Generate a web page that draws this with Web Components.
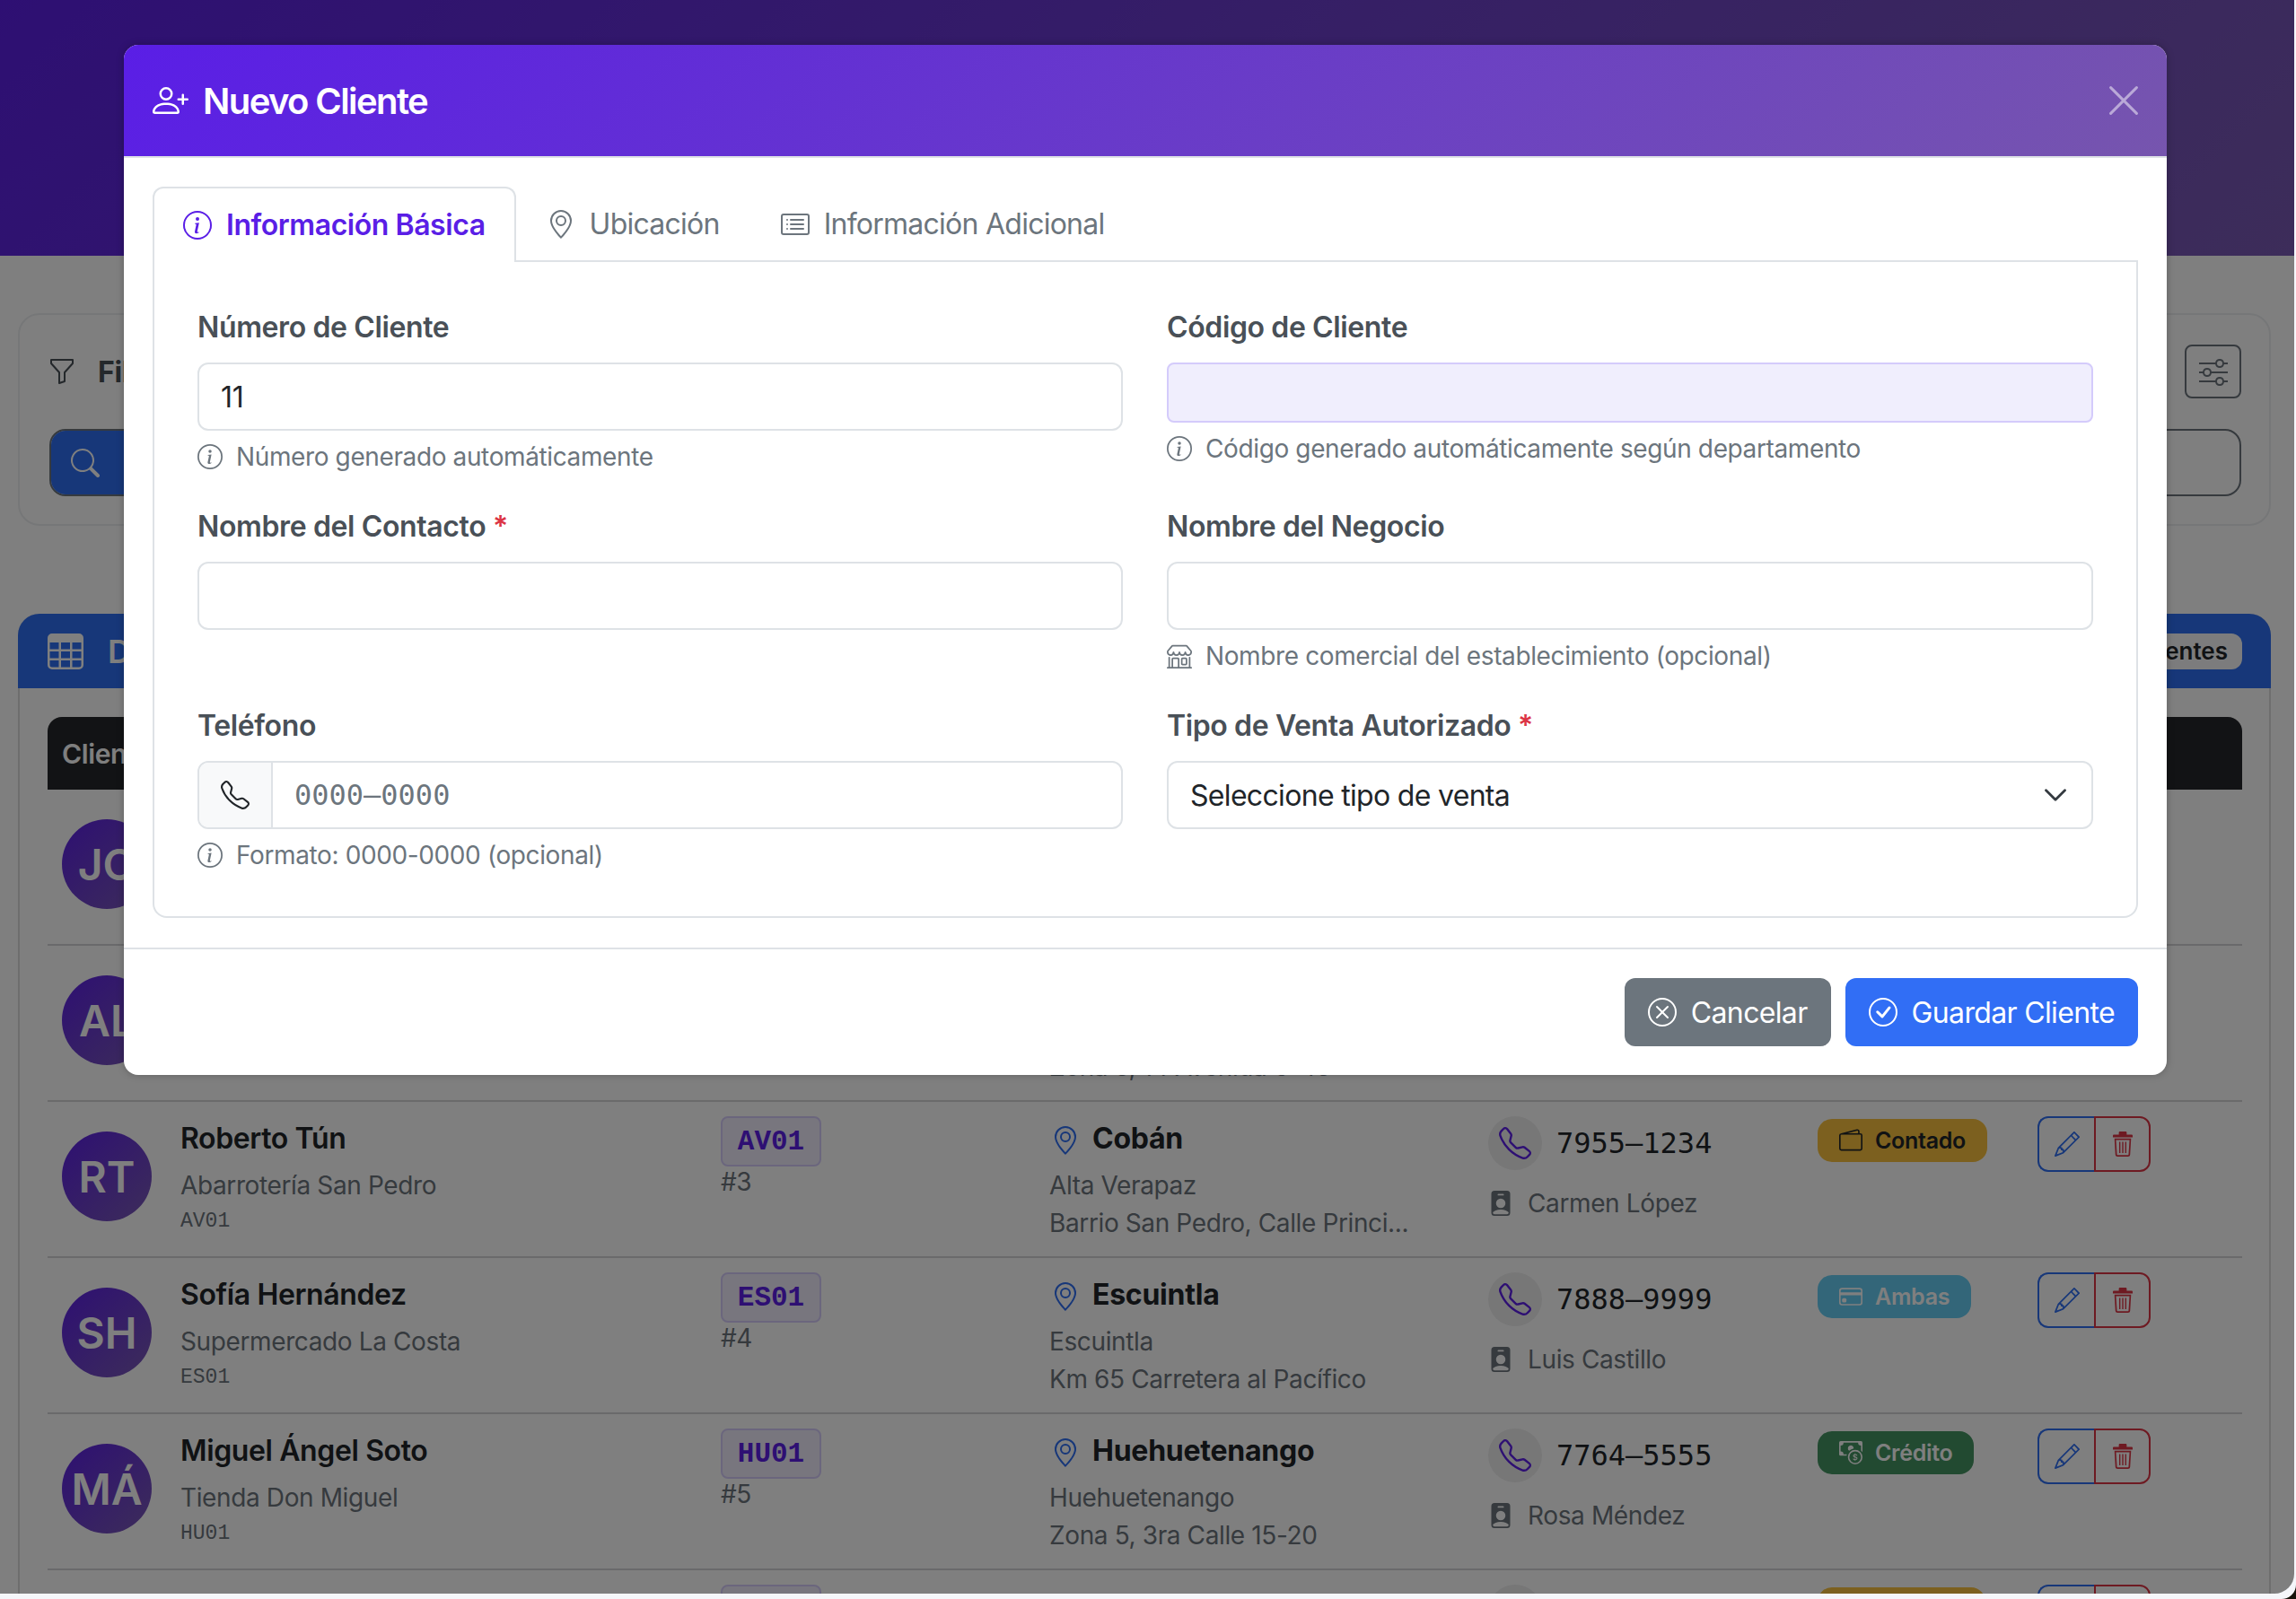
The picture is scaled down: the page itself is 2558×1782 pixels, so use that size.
<!DOCTYPE html>
<html lang="es">
<head>
<meta charset="utf-8">
<title>Nuevo Cliente</title>
<style>
  html {
    background: #17130a;
    font-family: Inter, "Liberation Sans", sans-serif;
    color: #212529;
    letter-spacing: -0.38px;
    overflow: hidden;
  }
  body {
    position: relative;
    width: 2558px;
    height: 1782px;
    margin: 0;
    overflow: hidden;
    background: #f5f6fa;
    border-bottom-right-radius: 16px;
  }
</style>
</head>
<body>
  <clients-page>
    <filter-panel></filter-panel>
    <clients-card></clients-card>
  </clients-page>

  <client-modal>
    <modal-tabs></modal-tabs>
    <client-form>
      <form-field label="Número de Cliente" hint="Número generado automáticamente">
        <text-box value="11"></text-box>
      </form-field>
      <form-field label="Código de Cliente" hint="Código generado automáticamente según departamento">
        <text-box variant="generated"></text-box>
      </form-field>
      <form-field label="Nombre del Contacto" required>
        <text-box></text-box>
      </form-field>
      <form-field label="Nombre del Negocio" hint="Nombre comercial del establecimiento (opcional)" hint-icon="shop">
        <text-box></text-box>
      </form-field>
      <form-field label="Teléfono" hint="Formato: 0000-0000 (opcional)">
        <phone-box placeholder="0000–0000"></phone-box>
      </form-field>
      <form-field label="Tipo de Venta Autorizado" required>
        <select-box value="Seleccione tipo de venta"></select-box>
      </form-field>
    </client-form>
  </client-modal>

<script>
/**
 * Paths of the icons used on the page, all on a 16 x 16 grid.
 */
const ICONS = {
  personPlus: '<path d="M6 8a3 3 0 1 0 0-6 3 3 0 0 0 0 6m2-3a2 2 0 1 1-4 0 2 2 0 0 1 4 0m4 8c0 1-1 1-1 1H1s-1 0-1-1 1-4 6-4 6 3 6 4m-1-.004c-.001-.246-.154-.986-.832-1.664C9.516 10.68 8.289 10 6 10s-3.516.68-4.168 1.332c-.678.678-.83 1.418-.832 1.664z"/><path fill-rule="evenodd" d="M13.5 5a.5.5 0 0 1 .5.5V7h1.5a.5.5 0 0 1 0 1H14v1.5a.5.5 0 0 1-1 0V8h-1.5a.5.5 0 0 1 0-1H13V5.5a.5.5 0 0 1 .5-.5"/>',
  info: '<path d="M8 15A7 7 0 1 1 8 1a7 7 0 0 1 0 14m0 1A8 8 0 1 0 8 0a8 8 0 0 0 0 16"/><path d="m8.93 6.588-2.29.287-.082.38.45.083c.294.07.352.176.288.469l-.738 3.468c-.194.897.105 1.319.808 1.319.545 0 1.178-.252 1.465-.598l.088-.416c-.2.176-.492.246-.686.246-.275 0-.375-.193-.304-.533zM9 4.5a1 1 0 1 1-2 0 1 1 0 0 1 2 0"/>',
  pin: '<path d="M12.166 8.94c-.524 1.062-1.234 2.12-1.96 3.07A32 32 0 0 1 8 14.58a32 32 0 0 1-2.206-2.57c-.726-.95-1.436-2.008-1.96-3.07C3.304 7.867 3 6.862 3 6a5 5 0 0 1 10 0c0 .862-.305 1.867-.834 2.94M8 16s6-5.686 6-10A6 6 0 0 0 2 6c0 4.314 6 10 6 10"/><path d="M8 8a2 2 0 1 1 0-4 2 2 0 0 1 0 4m0 1a3 3 0 1 0 0-6 3 3 0 0 0 0 6"/>',
  cardList: '<path d="M14.5 3a.5.5 0 0 1 .5.5v9a.5.5 0 0 1-.5.5h-13a.5.5 0 0 1-.5-.5v-9a.5.5 0 0 1 .5-.5zm-13-1A1.5 1.5 0 0 0 0 3.5v9A1.5 1.5 0 0 0 1.5 14h13a1.5 1.5 0 0 0 1.5-1.5v-9A1.5 1.5 0 0 0 14.5 2z"/><path d="M5 8a.5.5 0 0 1 .5-.5h7a.5.5 0 0 1 0 1h-7A.5.5 0 0 1 5 8m0-2.5a.5.5 0 0 1 .5-.5h7a.5.5 0 0 1 0 1h-7a.5.5 0 0 1-.5-.5m0 5a.5.5 0 0 1 .5-.5h7a.5.5 0 0 1 0 1h-7a.5.5 0 0 1-.5-.5m-1-5a.5.5 0 1 1-1 0 .5.5 0 0 1 1 0M4 8a.5.5 0 1 1-1 0 .5.5 0 0 1 1 0m0 2.5a.5.5 0 1 1-1 0 .5.5 0 0 1 1 0"/>',
  phone: '<path d="M3.654 1.328a.678.678 0 0 0-1.015-.063L1.605 2.3c-.483.484-.661 1.169-.45 1.77a17.6 17.6 0 0 0 4.168 6.608 17.6 17.6 0 0 0 6.608 4.168c.601.211 1.286.033 1.77-.45l1.034-1.034a.678.678 0 0 0-.063-1.015l-2.307-1.794a.68.68 0 0 0-.58-.122l-2.19.547a1.75 1.75 0 0 1-1.657-.459L5.482 8.062a1.75 1.75 0 0 1-.46-1.657l.548-2.19a.68.68 0 0 0-.122-.58zM1.884.511a1.745 1.745 0 0 1 2.612.163L6.29 2.98c.329.423.445.974.315 1.494l-.547 2.19a.68.68 0 0 0 .178.643l2.457 2.457a.68.68 0 0 0 .644.178l2.189-.547a1.75 1.75 0 0 1 1.494.315l2.306 1.794c.829.645.905 1.87.163 2.611l-1.034 1.034c-.74.74-1.846 1.065-2.877.702a18.6 18.6 0 0 1-7.01-4.42 18.6 18.6 0 0 1-4.42-7.009c-.362-1.03-.037-2.137.703-2.877z"/>',
  xCircle: '<path d="M8 15A7 7 0 1 1 8 1a7 7 0 0 1 0 14m0 1A8 8 0 1 0 8 0a8 8 0 0 0 0 16"/><path d="M4.646 4.646a.5.5 0 0 1 .708 0L8 7.293l2.646-2.647a.5.5 0 0 1 .708.708L8.707 8l2.647 2.646a.5.5 0 0 1-.708.708L8 8.707l-2.646 2.647a.5.5 0 0 1-.708-.708L7.293 8 4.646 5.354a.5.5 0 0 1 0-.708"/>',
  checkCircle: '<path d="M8 15A7 7 0 1 1 8 1a7 7 0 0 1 0 14m0 1A8 8 0 1 0 8 0a8 8 0 0 0 0 16"/><path d="m10.97 4.97-.02.022-3.473 4.425-2.093-2.094a.75.75 0 0 0-1.06 1.06L6.97 11.03a.75.75 0 0 0 1.079-.02l3.992-4.99a.75.75 0 0 0-1.071-1.05"/>',
  shop: '<path d="M2.97 1.35A1 1 0 0 1 3.73 1h8.54a1 1 0 0 1 .76.35l2.609 3.044A1.5 1.5 0 0 1 16 5.37v.255a2.375 2.375 0 0 1-4.25 1.458A2.37 2.37 0 0 1 9.875 8 2.37 2.37 0 0 1 8 7.083 2.37 2.37 0 0 1 6.125 8a2.37 2.37 0 0 1-1.875-.917A2.375 2.375 0 0 1 0 5.625V5.37a1.5 1.5 0 0 1 .361-.976zm1.78 4.275a1.375 1.375 0 0 0 2.75 0 .5.5 0 0 1 1 0 1.375 1.375 0 0 0 2.75 0 .5.5 0 0 1 1 0 1.375 1.375 0 1 0 2.75 0V5.37a.5.5 0 0 0-.12-.325L12.27 2H3.73L1.12 5.045A.5.5 0 0 0 1 5.37v.255a1.375 1.375 0 0 0 2.75 0 .5.5 0 0 1 1 0M1.5 8.5A.5.5 0 0 1 2 9v6h1v-5a1 1 0 0 1 1-1h3a1 1 0 0 1 1 1v5h6V9a.5.5 0 0 1 1 0v6h.5a.5.5 0 0 1 0 1H.5a.5.5 0 0 1 0-1H1V9a.5.5 0 0 1 .5-.5M4 15h3v-5H4zm5-5a1 1 0 0 1 1-1h2a1 1 0 0 1 1 1v3a1 1 0 0 1-1 1h-2a1 1 0 0 1-1-1zm3 0h-2v3h2z"/>',
  funnel: '<path d="M1.5 1.5A.5.5 0 0 1 2 1h12a.5.5 0 0 1 .5.5v2a.5.5 0 0 1-.128.334L10 8.692V13.5a.5.5 0 0 1-.342.474l-3 1A.5.5 0 0 1 6 14.5V8.692L1.628 3.834A.5.5 0 0 1 1.5 3.5zm1 .5v1.308l4.372 4.858A.5.5 0 0 1 7 8.5v5.306l2-.666V8.5a.5.5 0 0 1 .128-.334L13.5 3.308V2z"/>',
  search: '<path d="M11.742 10.344a6.5 6.5 0 1 0-1.397 1.398h-.001q.044.06.098.115l3.85 3.85a1 1 0 0 0 1.415-1.414l-3.85-3.85a1 1 0 0 0-.115-.1zM12 6.5a5.5 5.5 0 1 1-11 0 5.5 5.5 0 0 1 11 0"/>',
  sliders: '<path fill-rule="evenodd" d="M11.5 2a1.5 1.5 0 1 0 0 3 1.5 1.5 0 0 0 0-3M9.05 3a2.5 2.5 0 0 1 4.9 0H16v1h-2.05a2.5 2.5 0 0 1-4.9 0H0V3zM4.5 7a1.5 1.5 0 1 0 0 3 1.5 1.5 0 0 0 0-3M2.05 8a2.5 2.5 0 0 1 4.9 0H16v1H6.95a2.5 2.5 0 0 1-4.9 0H0V8zm9.45 4a1.5 1.5 0 1 0 0 3 1.5 1.5 0 0 0 0-3m-2.45 1a2.5 2.5 0 0 1 4.9 0H16v1h-2.05a2.5 2.5 0 0 1-4.9 0H0v-1z"/>',
  table: '<path d="M0 2a2 2 0 0 1 2-2h12a2 2 0 0 1 2 2v12a2 2 0 0 1-2 2H2a2 2 0 0 1-2-2zm15 2h-4v3h4zm0 4h-4v3h4zm0 4h-4v3h3a1 1 0 0 0 1-1zm-5 3v-3H6v3zm-5 0v-3H1v2a1 1 0 0 0 1 1zm-4-4h4V8H1zm0-4h4V4H1zm5-3v3h4V4zm4 4H6v3h4z"/>',
  pencil: '<path d="M12.146.146a.5.5 0 0 1 .708 0l3 3a.5.5 0 0 1 0 .708l-10 10a.5.5 0 0 1-.168.11l-5 2a.5.5 0 0 1-.65-.65l2-5a.5.5 0 0 1 .11-.168zM11.207 2.5 13.5 4.793 14.793 3.5 12.5 1.207zm1.586 3L10.5 3.207 4 9.707V10h.5a.5.5 0 0 1 .5.5v.5h.5a.5.5 0 0 1 .5.5v.5h.293zm-9.761 5.175-.106.106-1.528 3.821 3.821-1.528.106-.106A.5.5 0 0 1 5 12.5V12h-.5a.5.5 0 0 1-.5-.5V11h-.5a.5.5 0 0 1-.468-.325"/>',
  trash: '<path d="M6.2 0h3.6c.4 0 .7.3.7.7V2h3c.5 0 .8.3.8.8v.9H1.7v-.9c0-.5.3-.8.8-.8h3V.7c0-.4.3-.7.7-.7z"/><path fill-rule="evenodd" d="M2.7 4.4h10.6l-.6 10.3c-.1.8-.6 1.3-1.4 1.3H4.7c-.8 0-1.3-.5-1.4-1.3zm1 1 .6 9.2c0 .3.2.4.4.4h6.6c.2 0 .4-.1.4-.4l.6-9.2z"/><path d="M5.7 6.5h.8v7.2h-.8zm1.9 0h.8v7.2h-.8zm1.9 0h.8v7.2h-.8z"/>',
  wallet: '<path d="M12.136.326A1.5 1.5 0 0 1 14 1.78V3h.5A1.5 1.5 0 0 1 16 4.5v9a1.5 1.5 0 0 1-1.5 1.5h-13A1.5 1.5 0 0 1 0 13.5v-9a1.5 1.5 0 0 1 1.432-1.499zM5.562 3H13V1.78a.5.5 0 0 0-.621-.484zM1.5 4a.5.5 0 0 0-.5.5v9a.5.5 0 0 0 .5.5h13a.5.5 0 0 0 .5-.5v-9a.5.5 0 0 0-.5-.5z"/>',
  creditCard: '<path d="M0 4a2 2 0 0 1 2-2h12a2 2 0 0 1 2 2v8a2 2 0 0 1-2 2H2a2 2 0 0 1-2-2zm2-1a1 1 0 0 0-1 1v1h14V4a1 1 0 0 0-1-1zm13 4H1v5a1 1 0 0 0 1 1h12a1 1 0 0 0 1-1z"/><path d="M2 10a1 1 0 0 1 1-1h1a1 1 0 0 1 1 1v1a1 1 0 0 1-1 1H3a1 1 0 0 1-1-1z"/>',
  cashCoin: '<path fill-rule="evenodd" d="M11 15a4 4 0 1 0 0-8 4 4 0 0 0 0 8m5-4a5 5 0 1 1-10 0 5 5 0 0 1 10 0"/><path d="M9.438 11.944c.047.596.518 1.06 1.363 1.116v.44h.375v-.443c.875-.061 1.386-.529 1.386-1.207 0-.618-.39-.936-1.09-1.1l-.296-.07v-1.2c.376.043.614.248.671.532h.658c-.047-.575-.54-1.024-1.329-1.073V8.5h-.375v.45c-.747.073-1.255.522-1.255 1.158 0 .562.378.92 1.007 1.066l.248.061v1.272c-.384-.058-.639-.27-.696-.563h-.668zm1.36-1.354c-.369-.085-.569-.26-.569-.522 0-.294.216-.514.572-.578v1.1zm.432.746c.449.104.655.272.655.569 0 .339-.257.571-.709.614v-1.195z"/><path d="M1 0a1 1 0 0 0-1 1v8a1 1 0 0 0 1 1h4.083q.088-.517.258-1H3a2 2 0 0 0-2-2V3a2 2 0 0 0 2-2h10a2 2 0 0 0 2 2v3.528c.38.34.717.728 1 1.154V1a1 1 0 0 0-1-1z"/><path d="M9.998 5.083 10 5a2 2 0 1 0-3.132 1.65 6 6 0 0 1 3.13-1.567"/>',
  personBadge: '<path d="M2 2a2 2 0 0 1 2-2h8a2 2 0 0 1 2 2v12a2 2 0 0 1-2 2H4a2 2 0 0 1-2-2zm4.5 0a.5.5 0 0 0 0 1h3a.5.5 0 0 0 0-1zM8 11a3 3 0 1 0 0-6 3 3 0 0 0 0 6m5 2.755C12.146 12.825 10.623 12 8 12s-4.146.826-5 1.755V14a1 1 0 0 0 1 1h8a1 1 0 0 0 1-1z"/>',
  chevron: '<path fill="none" stroke="currentColor" stroke-linecap="round" stroke-linejoin="round" stroke-width="1.6" d="m2 5 6 6 6-6"/>',
  close: '<path fill="none" stroke="currentColor" stroke-linecap="round" stroke-width="1.5" d="M.8.8l14.4 14.4M15.2.8.8 15.2"/>'
}

/**
 * The rows of the clients table. The first two lie behind the dialog,
 * the last one is cut by the bottom of the window.
 */
const CLIENTS = [
  { initials: 'JO' },
  { initials: 'AL', address: 'Zona 5, 14 Avenida 6-45' },
  { initials: 'RT', name: 'Roberto Tún', shop: 'Abarrotería San Pedro', code: 'AV01', num: '#3', city: 'Cobán', dept: 'Alta Verapaz', address: 'Barrio San Pedro, Calle Princi...', phone: '7955–1234', contact: 'Carmen López', sale: 'contado' },
  { initials: 'SH', name: 'Sofía Hernández', shop: 'Supermercado La Costa', code: 'ES01', num: '#4', city: 'Escuintla', dept: 'Escuintla', address: 'Km 65 Carretera al Pacífico', phone: '7888–9999', contact: 'Luis Castillo', sale: 'ambas' },
  { initials: 'MÁ', name: 'Miguel Ángel Soto', shop: 'Tienda Don Miguel', code: 'HU01', num: '#5', city: 'Huehuetenango', dept: 'Huehuetenango', address: 'Zona 5, 3ra Calle 15-20', phone: '7764–5555', contact: 'Rosa Méndez', sale: 'credito' },
  { initials: '', sale: 'vacia' }
]

/**
 * The look of each kind of sale badge.
 */
const SALES = {
  contado: { label: 'Contado', icon: 'wallet', bg: '#f8c13f', fg: '#212529' },
  ambas: { label: 'Ambas', icon: 'creditCard', bg: '#66cdf2', fg: '#fff' },
  credito: { label: 'Crédito', icon: 'cashCoin', bg: '#459562', fg: '#fff' },
  vacia: { label: '', icon: 'wallet', bg: '#f8c13f', fg: '#212529', width: '187px' }
}

/**
 * An inline icon, taken from the ICONS table.
 */
customElements.define('app-icon',
  class extends HTMLElement {
    constructor () {
      super()
      this.attachShadow({ mode: 'open' })
    }

    connectedCallback () {
      const size = this.getAttribute('size') || 32
      this.shadowRoot.innerHTML = `
        <style>
          :host { display: inline-flex; flex: none; }
          svg { display: block; width: ${size}px; height: ${size}px; fill: currentColor; }
        </style>
        <svg viewBox="0 0 16 16">${ICONS[this.getAttribute('name')]}</svg>
      `
    }
  })

/**
 * The page behind the dialog: coloured band on top, then the content,
 * and the dark layer that the open dialog puts over all of it.
 */
const pageTemplate = document.createElement('template')
pageTemplate.innerHTML = `
  <style>
    :host {
      display: block;
      width: 2556px;
      height: 1776px;
      overflow: hidden;
      background: #fff;
      border-bottom-right-radius: 22px;
      position: relative;
    }
    .hero {
      height: 285px;
      background: linear-gradient(135deg, #5c1fe6, #7a5ab4);
    }
    main {
      display: flex;
      flex-direction: column;
      gap: 98px;
      width: 2510px;
      margin: 64px 0 0 20px;
    }
    .layer {
      position: absolute;
      inset: 0;
      background: rgba(0, 0, 0, 0.5);
    }
  </style>
  <div class="hero"></div>
  <main><slot></slot></main>
  <div class="layer"></div>
`
customElements.define('clients-page',
  class extends HTMLElement {
    constructor () {
      super()
      this.attachShadow({ mode: 'open' })
        .appendChild(pageTemplate.content.cloneNode(true))
    }
  })

/**
 * The filter card, mostly covered by the dialog.
 */
const filterTemplate = document.createElement('template')
filterTemplate.innerHTML = `
  <style>
    :host {
      display: block;
      height: 237px;
      box-sizing: border-box;
      padding: 33px 31px 34px 33px;
      border: 2px solid #eceef0;
      border-radius: 24px;
    }
    .top { display: flex; align-items: center; justify-content: space-between; height: 60px; }
    .title { display: flex; align-items: center; gap: 24px; margin-left: -2px; font-size: 32px; font-weight: 700; color: #495057; }
    .tune {
      display: flex;
      align-items: center;
      justify-content: center;
      width: 63px;
      height: 60px;
      box-sizing: border-box;
      border: 2px solid #6c757d;
      border-radius: 8px;
      color: #6c757d;
    }
    .search {
      display: flex;
      height: 75px;
      margin-top: 34px;
      box-sizing: border-box;
      border: 2px solid #6c757d;
      border-radius: 18px;
      overflow: hidden;
    }
    .go {
      display: flex;
      align-items: center;
      justify-content: center;
      width: 81px;
      box-sizing: border-box;
      padding-right: 6px;
      background: #2e6ef2;
      color: #fff;
    }
  </style>
  <div class="top">
    <div class="title"><app-icon name="funnel" size="32"></app-icon><span>Filtros</span></div>
    <div class="tune"><app-icon name="sliders" size="32"></app-icon></div>
  </div>
  <div class="search"><div class="go"><app-icon name="search" size="32"></app-icon></div></div>
`
customElements.define('filter-panel',
  class extends HTMLElement {
    constructor () {
      super()
      this.attachShadow({ mode: 'open' })
        .appendChild(filterTemplate.content.cloneNode(true))
    }
  })

/**
 * The card that holds the clients table.
 */
const cardTemplate = document.createElement('template')
cardTemplate.innerHTML = `
  <style>
    :host {
      display: block;
      border-right: 2px solid #dcdcdc;
      border-left: 2px solid #dcdcdc;
      border-radius: 24px 24px 0 0;
      margin-bottom: -400px;
    }
    header {
      display: flex;
      align-items: center;
      justify-content: space-between;
      height: 83px;
      box-sizing: border-box;
      margin: 0 -2px;
      padding: 0 32px 0 33px;
      background: #2e6ef2;
      border-radius: 24px 24px 0 0;
      color: #fff;
      font-size: 36px;
      font-weight: 600;
    }
    .title { display: flex; align-items: center; gap: 27px; }
    .count {
      display: flex;
      align-items: center;
      height: 40px;
      padding: 0 16px;
      border-radius: 12px;
      background: #f8f9fa;
      color: #212529;
      font-size: 26px;
      font-weight: 600;
      letter-spacing: 0;
    }
    .body { padding: 32px 30px 0 31px; }
    .head {
      height: 81px;
      box-sizing: border-box;
      padding: 0 16px;
      display: flex;
      align-items: center;
      border-radius: 16px 16px 0 0;
      background: #25272b;
      color: #fff;
      font-size: 30px;
      font-weight: 600;
    }
  </style>
  <header>
    <div class="title"><app-icon name="table" size="40"></app-icon><span>Directorio de Clientes</span></div>
    <div class="count">5 clientes</div>
  </header>
  <div class="body">
    <div class="head">Cliente</div>
    <div class="rows"></div>
  </div>
`
customElements.define('clients-card',
  class extends HTMLElement {
    constructor () {
      super()
      this.attachShadow({ mode: 'open' })
        .appendChild(cardTemplate.content.cloneNode(true))

      const rows = this.shadowRoot.querySelector('.rows')
      CLIENTS.forEach(client => {
        const row = document.createElement('client-row')
        row.client = client
        rows.appendChild(row)
      })
    }
  })

/**
 * One client in the table.
 */
customElements.define('client-row',
  class extends HTMLElement {
    constructor () {
      super()
      this.attachShadow({ mode: 'open' })
    }

    connectedCallback () {
      const c = this.client
      const sale = SALES[c.sale]
      this.shadowRoot.innerHTML = `
        <style>
          :host {
            display: grid;
            grid-template-columns: 734px 366px 491px 365px 246px 243px;
            height: 174px;
            box-sizing: border-box;
            border-bottom: 2px solid #d4d5d7;
            font-size: 28px;
            color: #6c757d;
          }
          .cell { box-sizing: border-box; padding: 16px 16px 0; }
          .client { display: flex; gap: 32px; }
          .avatar {
            display: flex;
            align-items: center;
            justify-content: center;
            flex: none;
            width: 100px;
            height: 100px;
            margin-top: 17px;
            border-radius: 50%;
            background: linear-gradient(135deg, #5c1fe6, #7a5ab4);
            color: #fff;
            font-size: 48px;
            font-weight: 600;
            letter-spacing: 0;
          }
          .strong { height: 48px; margin-top: 1px; font-size: 32px; line-height: 48px; font-weight: 600; color: #212529; }
          .line { height: 42px; line-height: 42px; white-space: nowrap; }
          .sub { margin-top: 7px; }
          .mono { margin-top: 4px; font: 23px/30px "Liberation Mono", monospace; letter-spacing: 0; }
          .code {
            width: 112px;
            height: 56px;
            box-sizing: border-box;
            display: flex;
            align-items: center;
            justify-content: center;
            border: 2px solid #d6cdfb;
            border-radius: 8px;
            background: #f0edfd;
            color: #5c1fe6;
            font: 700 31px "Liberation Mono", monospace;
            letter-spacing: 0;
          }
          .num { height: 34px; line-height: 34px; }
          .city { display: flex; gap: 14px; font-weight: 700; letter-spacing: -0.25px; }
          .pin { color: #2e6ef2; padding: 7px 0 0 2px; }
          .call { display: flex; align-items: center; gap: 16px; margin-left: -2px; }
          .round {
            display: flex;
            align-items: center;
            justify-content: center;
            width: 60px;
            height: 60px;
            border-radius: 50%;
            background: #eeeeef;
            color: #5c1fe6;
          }
          .number { font: 32px "DejaVu Sans Mono", monospace; letter-spacing: 0; color: #212529; }
          .contact { display: flex; align-items: center; gap: 16px; margin: 16px 0 0 -2px; }
          .badge {
            display: inline-flex;
            align-items: center;
            gap: 14px;
            height: 48px;
            margin-top: 3px;
            padding: 0 24px;
            box-sizing: border-box;
            width: ${sale && sale.width ? sale.width : 'auto'};
            border-radius: 16px;
            background: ${sale ? sale.bg : 'none'};
            color: ${sale ? sale.fg : 'inherit'};
            font-size: 25px;
            font-weight: 600;
            letter-spacing: -0.3px;
          }
          .actions { display: flex; padding-left: 15px; }
          .act {
            display: flex;
            align-items: center;
            justify-content: center;
            width: 63px;
            height: 62px;
            box-sizing: border-box;
            border: 2px solid;
          }
          .edit { color: #2e6ef2; border-radius: 12px 0 0 12px; border-right: none; }
          .del { color: #dc3545; border-radius: 0 12px 12px 0; }
        </style>
        <div class="cell client">
          <div class="avatar">${c.initials}</div>
          <div>
            <div class="strong">${c.name || ''}</div>
            <div class="line sub">${c.shop || ''}</div>
            <div class="mono">${c.code || ''}</div>
          </div>
        </div>
        <div class="cell">
          <div class="code">${c.code || ''}</div>
          <div class="num">${c.num || ''}</div>
        </div>
        <div class="cell">
          <div class="strong city"><span class="pin"><app-icon name="pin" size="32"></app-icon></span><span>${c.city || ''}</span></div>
          <div class="line sub">${c.dept || ''}</div>
          <div class="line">${c.address || ''}</div>
        </div>
        <div class="cell">
          <div class="call">
            <div class="round"><app-icon name="phone" size="36"></app-icon></div>
            <span class="number">${c.phone || ''}</span>
          </div>
          <div class="line contact">${c.phone ? `<app-icon name="personBadge" size="28"></app-icon><span>${c.contact}</span>` : ''}</div>
        </div>
        <div class="cell">
          ${sale ? `<span class="badge"><app-icon name="${sale.icon}" size="26"></app-icon><span>${sale.label}</span></span>` : ''}
        </div>
        <div class="cell actions">
          <div class="act edit"><app-icon name="pencil" size="28"></app-icon></div>
          <div class="act del"><app-icon name="trash" size="28"></app-icon></div>
        </div>
      `
    }
  })

/**
 * The dialog: header, slot for the tabs and form, footer with the buttons.
 */
const modalTemplate = document.createElement('template')
modalTemplate.innerHTML = `
  <style>
    :host {
      position: absolute;
      left: 138px;
      top: 50px;
      display: block;
      width: 2276px;
      height: 1148px;
      border-radius: 16px;
      background: #fff;
      box-shadow: 0 0 8px rgba(0, 0, 0, 0.25);
      overflow: hidden;
      z-index: 1;
    }
    header {
      display: flex;
      align-items: center;
      justify-content: space-between;
      height: 126px;
      box-sizing: border-box;
      padding: 0 32px 0 32px;
      border-bottom: 2px solid #dee2e6;
      background: linear-gradient(135deg, #5a1ee6, #7655ae);
      background-clip: padding-box;
      color: #fff;
    }
    .title { display: flex; align-items: center; gap: 16px; font-size: 40px; font-weight: 600; letter-spacing: -1.6px; }
    .close { opacity: 0.5; display: flex; }
    .content { padding: 32px 32px 0; height: 880px; box-sizing: border-box; }
    footer {
      display: flex;
      justify-content: flex-end;
      gap: 16px;
      padding: 32px;
      border-top: 2px solid #dee2e6;
    }
    .btn {
      display: flex;
      align-items: center;
      gap: 16px;
      height: 76px;
      box-sizing: border-box;
      padding: 0 26px;
      border-radius: 12px;
      color: #fff;
      font-size: 32px;
      letter-spacing: -0.65px;
    }
    .cancel { background: #6c757d; }
    .save { background: #316ef5; }
  </style>
  <header>
    <div class="title"><app-icon name="personPlus" size="40"></app-icon><span>Nuevo Cliente</span></div>
    <div class="close"><app-icon name="close" size="32"></app-icon></div>
  </header>
  <div class="content"><slot></slot></div>
  <footer>
    <div class="btn cancel"><app-icon name="xCircle" size="32"></app-icon><span>Cancelar</span></div>
    <div class="btn save"><app-icon name="checkCircle" size="32"></app-icon><span>Guardar Cliente</span></div>
  </footer>
`
customElements.define('client-modal',
  class extends HTMLElement {
    constructor () {
      super()
      this.attachShadow({ mode: 'open' })
        .appendChild(modalTemplate.content.cloneNode(true))
    }
  })

/**
 * The row of tabs on top of the form.
 */
const tabsTemplate = document.createElement('template')
tabsTemplate.innerHTML = `
  <style>
    :host { display: flex; font-size: 32px; color: #6c757d; letter-spacing: -0.75px; position: relative; z-index: 1; }
    .tab {
      display: flex;
      align-items: center;
      gap: 16px;
      height: 84px;
      box-sizing: border-box;
      padding: 0 34px;
      line-height: 48px;
    }
    .active {
      padding: 0 32px;
      border: 2px solid #dee2e6;
      border-bottom: none;
      border-radius: 12px 12px 0 0;
      background: #fff;
      color: #5a1ee6;
      font-weight: 600;
      letter-spacing: -0.45px;
    }
  </style>
  <div class="tab active"><app-icon name="info" size="32"></app-icon><span>Información Básica</span></div>
  <div class="tab"><app-icon name="pin" size="32"></app-icon><span>Ubicación</span></div>
  <div class="tab"><app-icon name="cardList" size="32"></app-icon><span>Información Adicional</span></div>
`
customElements.define('modal-tabs',
  class extends HTMLElement {
    constructor () {
      super()
      this.attachShadow({ mode: 'open' })
        .appendChild(tabsTemplate.content.cloneNode(true))
    }
  })

/**
 * The bordered panel with the two columns of fields.
 */
const formTemplate = document.createElement('template')
formTemplate.innerHTML = `
  <style>
    :host {
      display: grid;
      grid-template-columns: 1031px 1032px;
      grid-auto-rows: 190px;
      column-gap: 49px;
      row-gap: 32px;
      height: 733px;
      box-sizing: border-box;
      margin-top: -2px;
      padding: 49px 48px 48px;
      border: 2px solid #dee2e6;
      border-radius: 0 0 16px 16px;
    }
  </style>
  <slot></slot>
`
customElements.define('client-form',
  class extends HTMLElement {
    constructor () {
      super()
      this.attachShadow({ mode: 'open' })
        .appendChild(formTemplate.content.cloneNode(true))
    }
  })

/**
 * A label, the control passed in the slot, and an optional hint.
 */
customElements.define('form-field',
  class extends HTMLElement {
    constructor () {
      super()
      this.attachShadow({ mode: 'open' })
    }

    connectedCallback () {
      const hint = this.getAttribute('hint')
      const mark = this.hasAttribute('required') ? ' <b>*</b>' : ''
      this.shadowRoot.innerHTML = `
        <style>
          :host { display: block; }
          label { display: block; height: 48px; margin-bottom: 15px; font-size: 32px; line-height: 48px; font-weight: 600; color: #495057; }
          b { color: #dc3545; font-weight: 600; }
          .hint { display: flex; align-items: center; gap: 15px; height: 42px; margin-top: 8px; font-size: 28px; color: #6c757d; }
        </style>
        <label>${this.getAttribute('label')}${mark}</label>
        <slot></slot>
        ${hint ? `<div class="hint"><app-icon name="${this.getAttribute('hint-icon') || 'info'}" size="28"></app-icon><span>${hint}</span></div>` : ''}
      `
    }
  })

/**
 * A plain text box. The generated variant is lower and lavender.
 */
customElements.define('text-box',
  class extends HTMLElement {
    constructor () {
      super()
      this.attachShadow({ mode: 'open' })
    }

    connectedCallback () {
      this.shadowRoot.innerHTML = `
        <style>
          :host {
            display: flex;
            align-items: center;
            height: 76px;
            box-sizing: border-box;
            padding: 0 24px;
            border: 2px solid #dee2e6;
            border-radius: 12px;
            font-size: 32px;
            color: #212529;
          }
          :host([variant="generated"]) { height: 67px; border-color: #d4cbfb; background: #f0eefd; border-radius: 8px; }
        </style>
        <span>${this.getAttribute('value') || ''}</span>
      `
    }
  })

/**
 * The phone box with its icon on the left.
 */
customElements.define('phone-box',
  class extends HTMLElement {
    constructor () {
      super()
      this.attachShadow({ mode: 'open' })
    }

    connectedCallback () {
      this.shadowRoot.innerHTML = `
        <style>
          :host {
            display: flex;
            height: 76px;
            box-sizing: border-box;
            border: 2px solid #dee2e6;
            border-radius: 12px;
            overflow: hidden;
          }
          .icon {
            display: flex;
            align-items: center;
            justify-content: center;
            width: 80px;
            border-right: 2px solid #dee2e6;
            background: #f8f9fa;
            color: #212529;
          }
          .text { display: flex; align-items: center; padding-left: 24px; font: 32px "DejaVu Sans Mono", monospace; letter-spacing: 0; color: #6c757d; }
        </style>
        <div class="icon"><app-icon name="phone" size="32"></app-icon></div>
        <div class="text">${this.getAttribute('placeholder')}</div>
      `
    }
  })

/**
 * The drop-down box, closed.
 */
customElements.define('select-box',
  class extends HTMLElement {
    constructor () {
      super()
      this.attachShadow({ mode: 'open' })
    }

    connectedCallback () {
      this.shadowRoot.innerHTML = `
        <style>
          :host {
            display: flex;
            align-items: center;
            justify-content: space-between;
            height: 76px;
            box-sizing: border-box;
            padding: 0 26px 0 24px;
            border: 2px solid #dee2e6;
            border-radius: 12px;
            font-size: 32px;
            letter-spacing: -0.68px;
            color: #212529;
          }
          app-icon { color: #343a40; }
        </style>
        <span>${this.getAttribute('value')}</span>
        <app-icon name="chevron" size="28"></app-icon>
      `
    }
  })
</script>
</body>
</html>
